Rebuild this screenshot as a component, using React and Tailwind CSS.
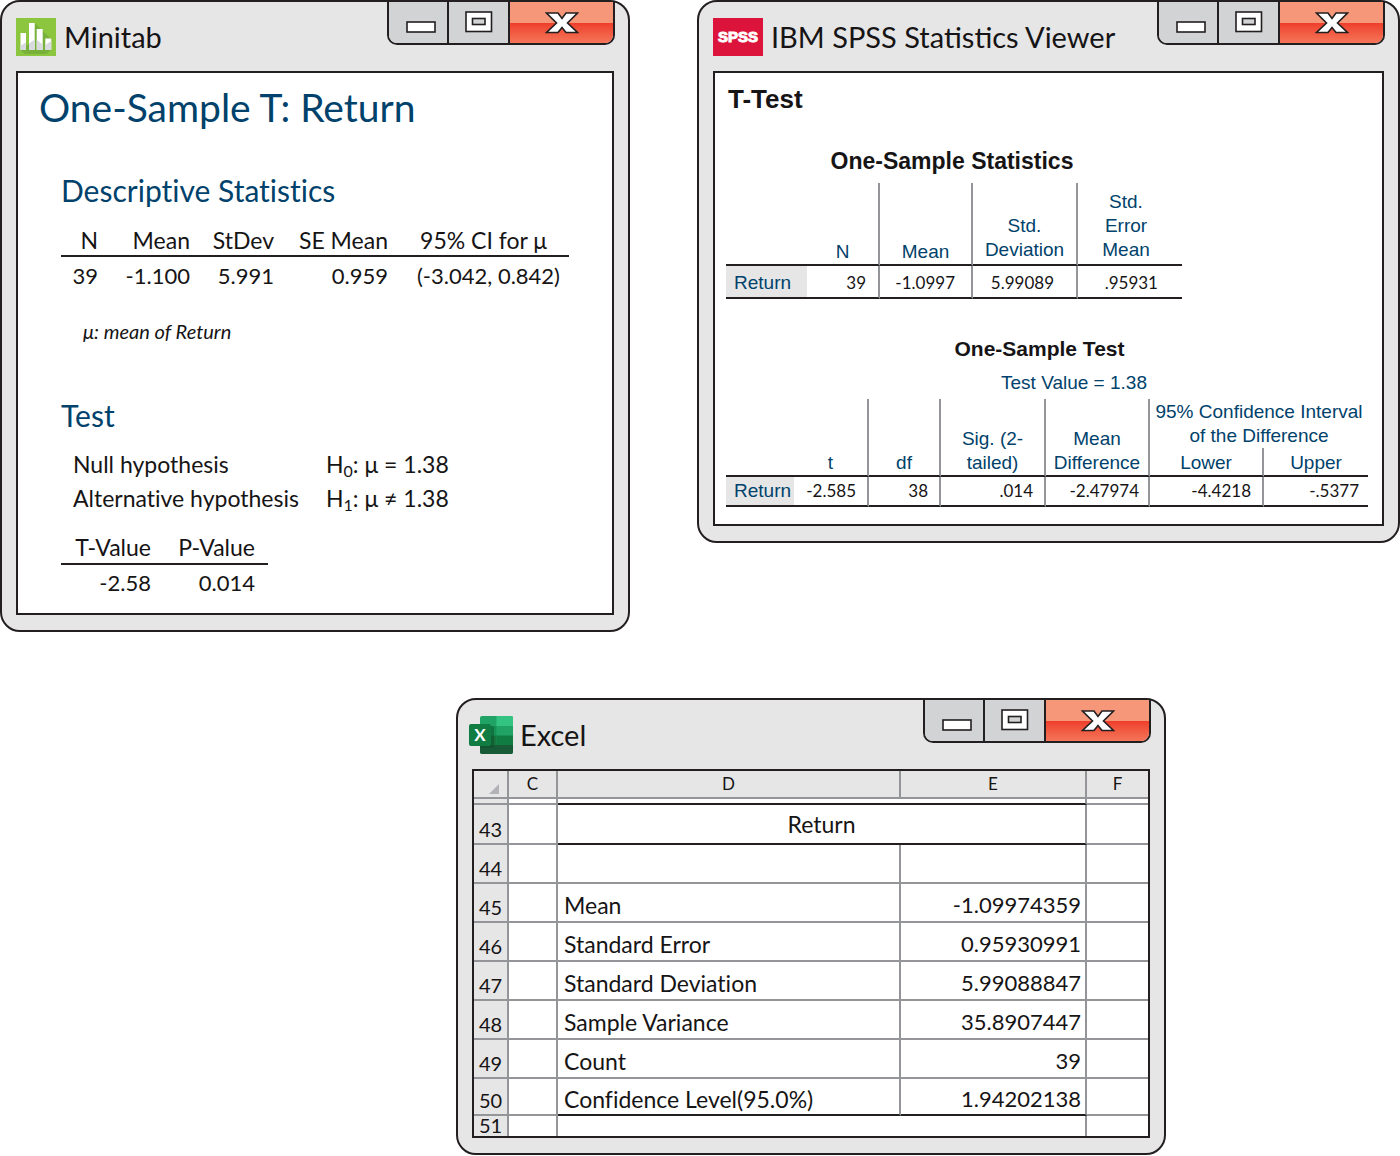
import React from 'react';
import clsx from 'clsx';

const excelRows = [
  { n: 45, label: 'Mean', value: '-1.09974359' },
  { n: 46, label: 'Standard Error', value: '0.95930991' },
  { n: 47, label: 'Standard Deviation', value: '5.99088847' },
  { n: 48, label: 'Sample Variance', value: '35.8907447' },
  { n: 49, label: 'Count', value: '39' },
];

function MinitabLogo() {
  return (
    <svg width="40" height="38" viewBox="0 0 40 38" aria-hidden="true">
      <rect width="40" height="38" fill="#8cc63f" />
      <path d="M18.700 5L34 20H35.500V31.700L30 36H9L4.500 31.700L13 26Z" fill="#78b13a" />
      <path d="M4.500 15h5.500v16.700H4.500z M13 5h5.700v26.700H13z M20.700 11h6v20.700h-6z M29.300 20.500h6v11.200h-6z" fill="#fff" />
      <path d="M4.500 27.500l5.500-3v7.200H4.500z M13 25.500l5.700-4v10.200H13z M20.700 22l6 4.500v5.200h-6z M29.300 27l6-4v8.700h-6z" fill="#d9d9e0" />
    </svg>
  );
}

function SpssLogo() {
  return (
    <svg width="50" height="38" viewBox="0 0 50 38" aria-hidden="true">
      <rect width="50" height="38" fill="#dc143c" />
      <text x="25" y="24" textAnchor="middle" fill="#fff" stroke="#fff" strokeWidth="1" fontFamily="Liberation Sans, sans-serif" fontSize="15" fontWeight="700">SPSS</text>
    </svg>
  );
}

function ExcelLogo() {
  return (
    <svg width="45" height="40" viewBox="0 0 45 40" aria-hidden="true">
      <rect x="11" y="1" width="33" height="38" rx="2" fill="#21a366" />
      <path d="M27.500 1H42a2 2 0 0 1 2 2v8H27.500z" fill="#33c481" />
      <path d="M27.500 11H44v9.500H27.500z" fill="#21a366" />
      <path d="M11 11h16.500v9.500H11z" fill="#169154" />
      <path d="M27.500 20.500H44V30H27.500z" fill="#107c41" />
      <path d="M11 20.500h16.500V30H11z" fill="#17743f" />
      <path d="M11 30h33v7a2 2 0 0 1-2 2H13a2 2 0 0 1-2-2z" fill="#185c37" />
      <path d="M11 11h12a2 2 0 0 1 2 2v18a2 2 0 0 1-2 2H11z" fill="#0b4527" opacity="0.4" />
      <rect x="0" y="9" width="22" height="22" rx="2" fill="#107c41" />
      <text x="11" y="26" textAnchor="middle" fill="#fff" fontFamily="Lato, sans-serif" fontSize="17" fontWeight="700">X</text>
    </svg>
  );
}

function WindowControls() {
  return (
    <div className="flex h-[43px] w-[228px] shrink-0 self-start overflow-hidden rounded-b-[10px] border-2 border-t-0 border-[#231f20]">
      <button type="button" aria-label="Minimize" className="flex w-[60px] items-center justify-center border-r-2 border-[#231f20] bg-[#d1d3d4] pt-2 pl-1.5">
        <svg width="30" height="12" viewBox="0 0 30 12">
          <rect x="1" y="1" width="28" height="10" fill="#fff" stroke="#231f20" strokeWidth="1.6" />
        </svg>
      </button>
      <button type="button" aria-label="Maximize" className="flex w-[61px] items-center justify-center border-r-2 border-[#231f20] bg-[#d1d3d4] pb-0.5">
        <svg width="28" height="22" viewBox="0 0 28 22">
          <rect x="1" y="1" width="25.500" height="19.500" fill="#fff" stroke="#231f20" strokeWidth="1.6" />
          <rect x="7.500" y="7.500" width="12.500" height="6" fill="#d1d3d4" stroke="#231f20" strokeWidth="1.6" />
        </svg>
      </button>
      <button type="button" aria-label="Close" className="flex flex-1 items-center justify-center bg-linear-to-b from-[#f7977a] from-52% via-[#ee3e2b] via-52% to-[#f47458]">
        <svg width="34" height="22" viewBox="0 0 34 22">
          <path d="M1.500 1H13L17 6.500L21 1H32.500L22.500 11L32.500 20.500H21L17 15.500L13 20.500H1.500L11.500 11Z" fill="#fff" stroke="#231f20" strokeWidth="1.6" />
        </svg>
      </button>
    </div>
  );
}

function Window({ logo, title, titleClass, children }) {
  return (
    <section className="rounded-[20px] border-2 border-[#231f20] bg-[#e6e6e6] pb-[15px]">
      <header className="flex h-[69px] items-center pr-[13px]">
        <div className={clsx('flex flex-1 items-center', titleClass)}>
          {logo}
          <h1 className="whitespace-nowrap text-[29px] leading-10">{title}</h1>
        </div>
        <WindowControls />
      </header>
      <div className="mx-[14px] border-2 border-[#231f20] bg-white">{children}</div>
    </section>
  );
}

function MinitabWindow() {
  return (
    <Window logo={<MinitabLogo />} title="Minitab" titleClass="gap-2 pl-[14px]">
      <div className="px-[43px] pt-[10px] pb-3 text-[23px] [font-variant-ligatures:none]">
        <h2 className="-ml-[22px] text-[39px] leading-[48px] text-[#00426b]">One-Sample T: Return</h2>
        <h3 className="mt-[39px] text-[30px] leading-10 text-[#00426b]">Descriptive Statistics</h3>
        <table className="mt-4 w-full table-fixed border-separate border-spacing-0 text-right">
          <colgroup>
            <col className="w-[37px]" />
            <col className="w-[92px]" />
            <col className="w-[84px]" />
            <col className="w-[114px]" />
            <col />
          </colgroup>
          <thead className="whitespace-nowrap leading-[29px] [&_th]:border-b-2 [&_th]:border-[#231f20] [&_th]:font-normal">
            <tr>
              <th>N</th>
              <th>Mean</th>
              <th>StDev</th>
              <th>SE Mean</th>
              <th className="pr-[22px]">95% CI for μ</th>
            </tr>
          </thead>
          <tbody className="whitespace-nowrap text-[22px] leading-[38px]">
            <tr>
              <td>39</td>
              <td>-1.100</td>
              <td>5.991</td>
              <td>0.959</td>
              <td className="pr-[9px]">(-3.042, 0.842)</td>
            </tr>
          </tbody>
        </table>
        <p className="mt-[22px] pl-[22px] text-[20px] leading-7 italic">μ: mean of Return</p>
        <h3 className="mt-[50px] text-[30px] leading-10 text-[#00426b]">Test</h3>
        <dl className="mt-3 grid grid-cols-[253px_1fr] pl-3 leading-[34px]">
          <dt>Null hypothesis</dt>
          <dd>H<sub className="text-[16px] leading-none">0</sub>: μ = 1.38</dd>
          <dt>Alternative hypothesis</dt>
          <dd>H<sub className="text-[16px] leading-none">1</sub>: μ ≠ 1.38</dd>
        </dl>
        <table className="mt-4 w-[207px] table-fixed border-separate border-spacing-0 text-right">
          <thead className="whitespace-nowrap leading-8 [&_th]:border-b-2 [&_th]:border-[#231f20] [&_th]:font-normal">
            <tr>
              <th className="w-[90px]">T-Value</th>
              <th className="pr-[13px]">P-Value</th>
            </tr>
          </thead>
          <tbody className="text-[22px] leading-9">
            <tr>
              <td>-2.58</td>
              <td className="pr-[13px]">0.014</td>
            </tr>
          </tbody>
        </table>
      </div>
    </Window>
  );
}

function SpssWindow() {
  return (
    <Window logo={<SpssLogo />} title="IBM SPSS Statistics Viewer" titleClass="gap-2 pl-[14px]">
      <div className="pt-[10px] pr-[14px] pb-[17px] pl-[11px] font-['Liberation_Sans']">
        <h2 className="pl-0.5 text-[26px] leading-8 font-bold">T-Test</h2>
        <table className="mt-[30px] w-[456px] table-fixed border-separate border-spacing-0">
          <caption className="pr-1 pb-[6px] text-[23px] leading-8 font-bold">One-Sample Statistics</caption>
          <colgroup>
            <col className="w-[81px]" />
            <col className="w-[73px]" />
            <col className="w-[93px]" />
            <col className="w-[105px]" />
            <col />
          </colgroup>
          <thead className="text-[19px] leading-6 text-[#00426b] [&_th]:h-[83px] [&_th]:border-b-2 [&_th]:border-b-[#231f20] [&_th]:border-r-[#939598] [&_th]:align-bottom [&_th]:font-normal">
            <tr>
              <th />
              <th className="border-r-2">N</th>
              <th className="border-r-2">Mean</th>
              <th className="border-r-2 pb-0.5">Std.<br />Deviation</th>
              <th className="pr-2 pb-0.5">Std.<br />Error<br />Mean</th>
            </tr>
          </thead>
          <tbody className="text-right font-['Lato'] text-[17px] leading-[28px] [&>tr>*]:border-b-2 [&>tr>*]:border-b-[#231f20] [&>tr>*]:border-r-[#939598] [&>tr>*]:pt-[3px]">
            <tr>
              <th className="bg-[#e6e6e6] pl-2 text-left font-['Liberation_Sans'] text-[19px] font-normal text-[#00426b]">Return</th>
              <td className="border-r-2 pr-3">39</td>
              <td className="border-r-2 pr-4">-1.0997</td>
              <td className="border-r-2 pr-[22px]">5.99089</td>
              <td className="pr-6">.95931</td>
            </tr>
          </tbody>
        </table>
        <h3 className="mt-[34px] pr-[15px] text-center text-[21px] leading-8 font-bold">One-Sample Test</h3>
        <table className="w-full table-fixed border-separate border-spacing-0">
          <caption className="pt-1 pb-0.5 pl-[54px] text-[19px] leading-7 text-[#00426b]">Test Value = 1.38</caption>
          <colgroup>
            <col className="w-[68px]" />
            <col className="w-[75px]" />
            <col className="w-[72px]" />
            <col className="w-[105px]" />
            <col className="w-[104px]" />
            <col className="w-[114px]" />
            <col />
          </colgroup>
          <thead className="text-[19px] leading-6 text-[#00426b] [&_th]:border-[#939598] [&_th]:p-0 [&_th]:align-bottom [&_th]:font-normal">
            <tr>
              <th rowSpan={2} className="border-b-2 border-b-[#231f20]!" />
              <th rowSpan={2} className="border-r-2 border-b-2 border-b-[#231f20]!">t</th>
              <th rowSpan={2} className="border-r-2 border-b-2 border-b-[#231f20]!">df</th>
              <th rowSpan={2} className="border-r-2 border-b-2 border-b-[#231f20]!">Sig. (2-<br />tailed)</th>
              <th rowSpan={2} className="border-r-2 border-b-2 border-b-[#231f20]!">Mean<br />Difference</th>
              <th colSpan={2} className="h-[49px] whitespace-nowrap">95% Confidence Interval<br />of the Difference</th>
            </tr>
            <tr>
              <th className="h-[29px] border-r-2 border-b-2 border-b-[#231f20]!">Lower</th>
              <th className="border-b-2 border-b-[#231f20]!">Upper</th>
            </tr>
          </thead>
          <tbody className="text-right font-['Lato'] text-[17px] leading-7 [&>tr>*]:border-b-2 [&>tr>*]:border-b-[#231f20] [&>tr>*]:border-r-[#939598]">
            <tr>
              <th className="bg-[#e6e6e6] pl-2 text-left font-['Liberation_Sans'] text-[19px] font-normal text-[#00426b]">Return</th>
              <td className="border-r-2 pr-[11px]">-2.585</td>
              <td className="border-r-2 pr-[11px]">38</td>
              <td className="border-r-2 pr-[11px]">.014</td>
              <td className="border-r-2 pr-[9px]">-2.47974</td>
              <td className="border-r-2 pr-[11px]">-4.4218</td>
              <td className="pr-[9px]">-.5377</td>
            </tr>
          </tbody>
        </table>
      </div>
    </Window>
  );
}

function ExcelWindow() {
  return (
    <Window logo={<ExcelLogo />} title="Excel" titleClass="gap-[6px] pl-[11px]">
      <table className="w-full table-fixed border-separate border-spacing-0 text-[22px] leading-7 [font-variant-ligatures:none] [&_td]:border-[#939598] [&_th]:border-[#939598]">
        <colgroup>
          <col className="w-[35px]" />
          <col className="w-[49px]" />
          <col />
          <col className="w-[186px]" />
          <col className="w-[61px]" />
        </colgroup>
        <thead className="bg-[#e6e6e6] text-[17px] leading-[26px] [&_th]:border-r-2 [&_th]:border-b-2 [&_th]:font-normal">
          <tr className="h-7">
            <th aria-label="Select all">
              <svg className="mt-[10px] ml-auto mr-2" width="10" height="10" viewBox="0 0 10 10">
                <path d="M10 0V10H0Z" fill="#b1b3b6" />
              </svg>
            </th>
            <th>C</th>
            <th>D</th>
            <th>E</th>
            <th className="border-r-0!">F</th>
          </tr>
        </thead>
        <tbody className="[&_td]:border-r-2 [&_td]:border-b-2 [&_td:last-child]:border-r-0 [&_th]:border-r-2 [&_th]:border-b-2 [&_th]:bg-[#e6e6e6] [&_th]:align-bottom [&_th]:text-[20px] [&_th]:font-normal">
          <tr className="h-[6px]">
            <th />
            <td />
            <td colSpan={2} className="border-b-[#231f20]!" />
            <td />
          </tr>
          <tr className="h-10">
            <th>43</th>
            <td />
            <td colSpan={2} className="border-b-[#231f20]! text-center text-[23px]">Return</td>
            <td />
          </tr>
          <tr className="h-[39px]">
            <th>44</th>
            <td />
            <td />
            <td />
            <td />
          </tr>
          {excelRows.map((row) => (
            <tr key={row.n} className="h-[39px]">
              <th>{row.n}</th>
              <td />
              <td className="pt-1 pl-[6px] text-[23px]">{row.label}</td>
              <td className="pt-1 pr-1 text-right">{row.value}</td>
              <td />
            </tr>
          ))}
          <tr className="h-[37px]">
            <th>50</th>
            <td />
            <td className="border-b-[#231f20]! pt-1 pl-[6px] text-[23px]">Confidence Level(95.0%)</td>
            <td className="border-b-[#231f20]! pt-1 pr-1 text-right">1.94202138</td>
            <td />
          </tr>
          <tr className="h-5 leading-[18px] [&>*]:border-b-0!">
            <th className="align-top!">51</th>
            <td />
            <td colSpan={2} />
            <td />
          </tr>
        </tbody>
      </table>
    </Window>
  );
}

export default function App() {
  return (
    <main className="bg-white font-['Lato',sans-serif] text-[#161415]">
      <div className="grid grid-cols-[630fr_703fr] items-start gap-[67px]">
        <MinitabWindow />
        <SpssWindow />
      </div>
      <div className="mt-[66px] pr-[234px] pl-[456px]">
        <ExcelWindow />
      </div>
    </main>
  );
}
